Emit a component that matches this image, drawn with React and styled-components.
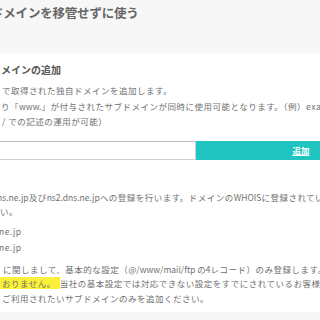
import React from "react";
import styled, { createGlobalStyle } from "styled-components";

const GlobalStyle = createGlobalStyle`
  html, body {
    margin: 0;
    padding: 0;
    background: #fff;
  }
  body {
    width: 320px;
    height: 320px;
    overflow: hidden;
    font-family: "Noto Sans CJK JP", "Noto Sans", sans-serif;
    color: #6e6e6e;
  }
`;

const Page = styled.div`
  width: 320px;
  height: 320px;
  overflow: hidden;
  display: flex;
  flex-direction: column;
`;

const Header = styled.header`
  height: 52px;
  flex: 0 0 52px;
  box-sizing: border-box;
  padding-top: 5px;
  background: #f7f7f7;
  box-shadow: 0 1px 2px rgba(0, 0, 0, 0.06);
`;

const Title = styled.h1`
  margin: 0;
  font-size: 12.5px;
  line-height: 16px;
  font-weight: 700;
  color: #666;
  letter-spacing: -0.2px;
  white-space: nowrap;
  text-indent: -9px;
`;

const Section = styled.section`
  flex: 1;
  padding-top: 11px;
  display: flex;
  flex-direction: column;
`;

const Heading = styled.h2`
  margin: 0;
  font-size: 10px;
  line-height: 14px;
  font-weight: 700;
  color: #555;
  white-space: nowrap;
  text-indent: -9px;
`;

const Para = styled.div`
  margin-top: ${p => p.$gap || 0}px;
  font-size: 8.5px;
  line-height: ${p => p.$lh || 14.5}px;
  letter-spacing: 0.5px;
  color: #707070;
`;

const Line = styled.div`
  white-space: nowrap;
  text-indent: ${p => p.$shift || 0}px;
`;

const Latin = styled.span`
  letter-spacing: 0;
`;

const Mark = styled.span`
  background: #fbf03a;
  padding: 0 4px 0 2px;
`;

const FormRow = styled.div`
  display: flex;
  margin-top: 11px;
  margin-left: -24px;
  height: 19px;
`;

const Input = styled.input`
  flex: 0 0 220px;
  box-sizing: border-box;
  height: 19px;
  margin: 0;
  border: 1px solid #cfcfcf;
  border-top-color: #bdbdbd;
  background: #fff;
  outline: none;
`;

const AddButton = styled.button`
  flex: 0 0 210px;
  height: 19px;
  margin: 0;
  border: none;
  background: #20c5c1;
  color: #fff;
  font-family: inherit;
  font-size: 8.5px;
  font-weight: 700;
  text-decoration: underline;
  padding: 0;
`;

const Footer = styled.div`
  flex: 0 0 8px;
  background: #f6f6f6;
`;

export default function App() {
  return (
    <>
      <GlobalStyle />
      <Page>
        <Header>
          <Title>ドメインを移管せずに使う</Title>
        </Header>
        <Section>
          <Heading>ドメインの追加</Heading>
          <Para $gap={6} $lh={15.5}>
            <Line $shift={2}>で取得された独自ドメインを追加します。</Line>
            <Line $shift={1}>り「<Latin>www.</Latin>」が付与されたサブドメインが同時に使用可能となります。（例）example.com</Line>
            <Line $shift={2}>/ での記述の運用が可能）</Line>
          </Para>
          <FormRow>
            <Input type="text" />
            <AddButton type="button">追加</AddButton>
          </FormRow>
          <Para $gap={30}>
            <Line $shift={-3}><Latin>ns.ne.jp</Latin>及び<Latin>ns2.dns.ne.jp</Latin>への登録を行います。ドメインの<Latin>WHOIS</Latin>に登録されているネームサーバー</Line>
            <Line $shift={0}>い。</Line>
          </Para>
          <Para $gap={4} $lh={16}>
            <Line $shift={-1}>ne.jp</Line>
            <Line $shift={-1}>ne.jp</Line>
          </Para>
          <Para $gap={7}>
            <Line $shift={3}>に関しまして、基本的な設定（<Latin>@/www/mail/ftp の4</Latin>レコード）のみ登録します。</Line>
            <Line $shift={0}><Mark>おりません。</Mark>当社の基本設定では対応できない設定をすでにされているお客様に</Line>
            <Line $shift={2}>ご利用されたいサブドメインのみを追加ください。</Line>
          </Para>
        </Section>
        <Footer />
      </Page>
    </>
  );
}
